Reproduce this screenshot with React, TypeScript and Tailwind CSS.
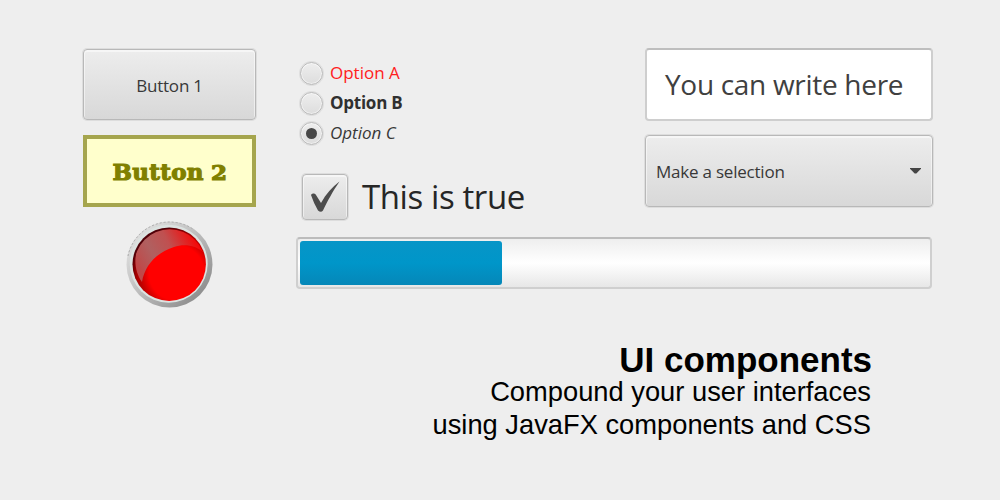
import React from "react";

const raised =
  "rounded-[4px] border-[1.5px] border-[#b8b8b8] bg-linear-to-b from-[#ededed] to-[#d8d8d8] shadow-[inset_0_1px_0_1px_rgba(255,255,255,0.5),0_0_0_1px_rgba(200,200,200,0.45)]";

function RoundButton() {
  return (
    <svg width="88" height="88" viewBox="0 0 88 88" aria-hidden="true">
      <defs>
        <linearGradient id="rim" x1="0.1" y1="0.1" x2="0.9" y2="0.9">
          <stop offset="0" stopColor="#e2e2e2" />
          <stop offset="0.45" stopColor="#c0c0c0" />
          <stop offset="1" stopColor="#8a8a8a" />
        </linearGradient>
        <linearGradient id="gloss" x1="0.05" y1="0.75" x2="0.95" y2="0.35">
          <stop offset="0" stopColor="#c04848" />
          <stop offset="0.3" stopColor="#b06060" />
          <stop offset="0.6" stopColor="#c05050" />
          <stop offset="1" stopColor="#f50808" />
        </linearGradient>
        <radialGradient id="ball" cx="0.6" cy="0.62" r="0.68">
          <stop offset="0.55" stopColor="#ff0000" />
          <stop offset="0.8" stopColor="#a80000" />
          <stop offset="0.92" stopColor="#500008" />
        </radialGradient>
        <clipPath id="face">
          <circle cx="43.7" cy="43.7" r="35.4" />
        </clipPath>
      </defs>
      <circle cx="43.5" cy="43.5" r="43" fill="url(#rim)" />
      <path d="M2 35A42.5 42.5 0 0 1 67 8" fill="none" stroke="#aaaaaa" strokeWidth="1" strokeDasharray="2 2" />
      <circle cx="42.7" cy="42.7" r="39" fill="#dce3e1" />
      <circle cx="43.2" cy="43.2" r="36.7" fill="url(#ball)" />
      <path
        d="M16 61C4 44 8 17 30 8C52 0 73 15 77 31C70 25 59 22 48 26C32 31 19 43 16 61Z"
        fill="url(#gloss)"
        clipPath="url(#face)"
      />
    </svg>
  );
}

function Radio({ label, style, checked = false }: { label: string; style: string; checked?: boolean }) {
  return (
    <label className="flex h-[30px] items-center gap-[7px]">
      <span className="flex size-[23px] items-center justify-center rounded-full border border-[#bababa] bg-linear-to-b from-[#eeeeee] to-[#dddddd] shadow-[inset_0_0_0_1px_rgba(255,255,255,0.5),0_0_0_1px_rgba(200,200,200,0.4)]">
        {checked && <span className="size-[11px] rounded-full bg-[#484848]" />}
      </span>
      <span className={style}>{label}</span>
    </label>
  );
}

export default function App() {
  return (
    <main className="flex h-[500px] w-[1000px] flex-col overflow-hidden bg-[#eeeeee] pt-[49px] pl-[83px] font-['Open_Sans','Noto_Sans',sans-serif] text-[17px] leading-[24px] text-[#383838]">
      <div className="flex gap-[40px]">
        <section className="flex w-[173px] flex-col items-center">
          <button className={`h-[71px] w-[173px] pt-[2px] tracking-[-0.2px] ${raised}`}>Button 1</button>
          <button className="mt-[15px] h-[72px] w-[173px] border-4 border-[#a5a54d] bg-[#ffffcc] pt-[2px] font-['DejaVu_Serif',serif] text-[23px] font-bold tracking-[0.3px] text-[#808000] [-webkit-text-stroke:1.1px_#808000]">
            Button <span className="inline-block origin-bottom scale-x-[1.15] text-[20px]">2</span>
          </button>
          <div className="mt-[14px]">
            <RoundButton />
          </div>
        </section>

        <section className="flex w-[636px] flex-col">
          <div className="flex h-[173px] justify-between">
            <div className="flex flex-col pt-[9px] pl-[4px]">
              <Radio label="Option A" style="text-[#ff2020]" />
              <Radio label="Option B" style="font-bold tracking-[-0.25px] text-[#303030]" />
              <Radio label="Option C" style="italic" checked />
              <label className="mt-[26px] flex items-center gap-[14px] pl-[2px]">
                <span className={`flex size-[46px] items-center justify-center ${raised}`}>
                  <svg width="32" height="34" viewBox="0 0 32 34" fill="#4c4c4c" aria-hidden="true">
                    <path d="M2 15C3 13 6 13 7 15L12 23C17 14 23 7 30.500 1.500C24 11 18 22 14 30.500Q12 33 9 30.500Q5 24 2 15Z" />
                  </svg>
                </span>
                <span className="text-[33px] leading-[44px] tracking-[-0.4px] text-[#262626]">This is true</span>
              </label>
            </div>
            <div className="-mr-px flex w-[288px] flex-col">
              <div className="-mt-px flex h-[73px] items-center rounded-[4px] border-2 border-[#cecece] border-t-[#bebebe] bg-white pb-px pl-[18px] text-[28px] leading-[36px] tracking-[-0.3px] text-[#404040]">
                You can write here
              </div>
              <div className={`mt-[14px] flex h-[72px] items-center justify-between pt-[2px] pr-[11px] pl-[10px] ${raised}`}>
                <span className="tracking-[-0.22px]">Make a selection</span>
                <svg className="mb-[3px]" width="11" height="6" viewBox="0 0 11 6" fill="#454545" aria-hidden="true">
                  <path d="M0 0H11V0.800L6.300 5.500H4.700L0 0.800Z" />
                </svg>
              </div>
            </div>
          </div>
          <div className="mt-[15px] h-[52px] rounded-[4px] border-2 border-[#cfcfcf] border-t-[#bcbcbc] bg-linear-to-b from-[#eeeeee] via-white to-[#e7e7e7] px-[2px] pt-[2px]">
            <div className="h-[44px] w-[202px] rounded-[3px] bg-linear-to-b from-[#0795c7] via-[#0096c9] to-[#0587b8]" />
          </div>
        </section>
      </div>

      <footer className="mt-[33px] mr-[129px] text-right font-['Liberation_Sans',Arial,sans-serif] text-[27.3px] leading-[33px] text-black">
        <h1 className="-mr-px text-[35px] leading-[36px] font-bold">UI components</h1>
        <p className="-mt-[3px]">Compound your user interfaces</p>
        <p>using JavaFX components and CSS</p>
      </footer>
    </main>
  );
}
